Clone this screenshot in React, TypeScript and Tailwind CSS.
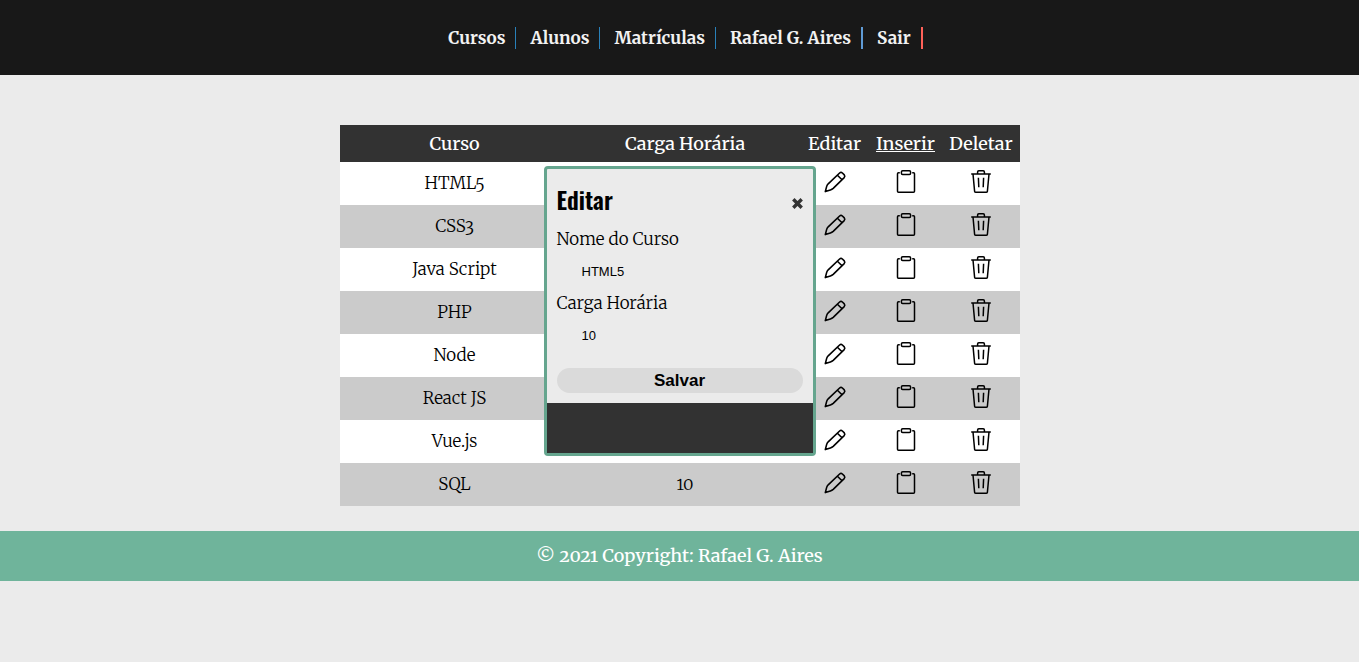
import { useState } from "react";

const links = [
  { label: "Cursos", line: "border-r border-[#2980b9]" },
  { label: "Alunos", line: "border-r border-[#2980b9]" },
  { label: "Matrículas", line: "border-r border-[#2980b9]" },
  { label: "Rafael G. Aires", line: "border-r-2 border-[#5f9bd5]" },
  { label: "Sair", line: "border-r-2 border-[#ff6158]" },
];

const courses = ["HTML5", "CSS3", "Java Script", "PHP", "Node", "React JS", "Vue.js", "SQL"];

function PencilIcon() {
  return (
    <svg className="block" width="24" height="24" viewBox="0 0 24 24" fill="none" stroke="currentColor" strokeWidth="1.6" strokeLinejoin="round" aria-hidden="true">
      <path d="M2.3 21.6 L3.6 16.6 Q4 15 5.2 13.8 L16.6 3 Q18 1.8 19.4 3 L21.3 4.9 Q22.4 6.2 21.2 7.6 L10.2 18.4 Q9 19.5 7.4 20 Z M14.4 5.2 L19 9.7" />
    </svg>
  );
}

function ClipboardIcon() {
  return (
    <svg className="block" width="24" height="24" viewBox="0 0 24 24" fill="none" stroke="currentColor" strokeWidth="1.5" strokeLinejoin="round" aria-hidden="true">
      <path d="M5.8 2.8 H4.5 Q3.5 2.8 3.5 3.8 V21.3 Q3.5 22.3 4.5 22.3 H19.5 Q20.5 22.3 20.5 21.3 V3.8 Q20.5 2.8 19.5 2.8 H18.2" />
      <rect x="7.4" y="0.8" width="9.2" height="3.6" rx="1.2" />
    </svg>
  );
}

function TrashIcon() {
  return (
    <svg className="block" width="24" height="24" viewBox="0 0 24 24" fill="none" stroke="currentColor" strokeWidth="1.5" strokeLinejoin="round" aria-hidden="true">
      <path d="M2.2 3.9 H21.8 M8.6 3.5 V2 Q8.6 0.8 9.8 0.8 H14.2 Q15.4 0.8 15.4 2 V3.5 M4 4 L5.6 21.3 Q5.8 22.3 6.8 22.3 H17.2 Q18.2 22.3 18.4 21.3 L20 4 M9.4 7.8 L9.8 17.2 M14.6 7.8 L14.2 17.2" />
    </svg>
  );
}

function EditDialog({ onClose }: { onClose: () => void }) {
  return (
    <div role="dialog" aria-labelledby="dialog-title" className="absolute top-[41px] left-1/2 w-68 -translate-x-1/2 rounded-sm border-3 border-[#65a58e] bg-[#ebebeb]">
      <form className="flex flex-col px-2.5 pt-3 pb-2.5" onSubmit={(e) => e.preventDefault()}>
        <div className="mb-1 flex items-center justify-between">
          <h2 id="dialog-title" className="font-['Oswald','Roboto_Condensed','Roboto',sans-serif] text-2xl leading-9 font-semibold">Editar</h2>
          <button type="button" aria-label="Fechar" onClick={onClose} className="pt-2 text-[#333]">
            <svg width="11" height="11" viewBox="0 0 11 11" fill="none" stroke="currentColor" strokeWidth="3.4" aria-hidden="true">
              <path d="M1.3 1.3 L9.7 9.7 M9.7 1.3 L1.3 9.7" />
            </svg>
          </button>
        </div>
        <label htmlFor="course-name" className="leading-9">Nome do Curso</label>
        <input id="course-name" defaultValue="HTML5" className="h-7 w-full bg-transparent pl-[25px] font-['Liberation_Sans',Arial,sans-serif] text-[13px] outline-none" />
        <label htmlFor="course-hours" className="leading-9">Carga Horária</label>
        <input id="course-hours" defaultValue="10" className="h-7 w-full bg-transparent pl-[25px] font-['Liberation_Sans',Arial,sans-serif] text-[13px] outline-none" />
        <button type="submit" className="mt-[19px] h-[25px] rounded-full bg-[#dadada] font-['Liberation_Sans',Arial,sans-serif] text-[17px] leading-6 font-bold">Salvar</button>
      </form>
      <div className="h-[50px] bg-[#323232]" />
    </div>
  );
}

export default function App() {
  const [editing, setEditing] = useState(true);
  const edit = () => setEditing(true);

  return (
    <div className="min-h-screen bg-[#ebebeb] font-['Merriweather','DejaVu_Serif_Condensed','DejaVu_Serif',serif] text-[17px] font-light text-black [font-variant-numeric:oldstyle-nums]">
      <header className="flex h-[75px] items-center justify-center bg-[#181818]">
        <nav className="flex gap-3.5 pl-3">
          {links.map((link) => (
            <a key={link.label} href="#" className={`pr-2.5 text-[17px] leading-[22px] font-bold text-[#f2f2f2] ${link.line}`}>{link.label}</a>
          ))}
        </nav>
      </header>
      <main className="relative mx-auto mt-[50px] w-full max-w-[680px]">
        <table className="w-full table-fixed border-collapse text-center">
          <colgroup>
            <col className="w-[230px]" />
            <col className="w-[231px]" />
            <col className="w-[68px]" />
            <col className="w-[74px]" />
            <col className="w-[77px]" />
          </colgroup>
          <thead className="bg-[#323232] text-lg text-white">
            <tr className="h-[37px]">
              <th className="p-0 font-medium">Curso</th>
              <th className="p-0 font-medium">Carga Horária</th>
              <th className="p-0 font-medium">Editar</th>
              <th className="p-0 font-medium"><a href="#" className="underline">Inserir</a></th>
              <th className="p-0 font-medium">Deletar</th>
            </tr>
          </thead>
          <tbody>
            {courses.map((course) => (
              <tr key={course} className="h-[43px] bg-white even:bg-[#cbcbcb]">
                <td className="p-0 pt-px">{course}</td>
                <td className="p-0 pt-px">10</td>
                <td className="p-0 pb-1"><button type="button" aria-label={`Editar ${course}`} onClick={edit} className="mx-auto block"><PencilIcon /></button></td>
                <td className="p-0 pb-1"><button type="button" aria-label={`Inserir ${course}`} className="mx-auto block"><ClipboardIcon /></button></td>
                <td className="p-0 pb-1"><button type="button" aria-label={`Deletar ${course}`} className="mx-auto block"><TrashIcon /></button></td>
              </tr>
            ))}
          </tbody>
        </table>
        {editing && <EditDialog onClose={() => setEditing(false)} />}
      </main>
      <footer className="mt-[25px] flex h-[50px] items-center justify-center bg-[#6fb49b] text-lg font-medium text-white">
        © 2021 Copyright: Rafael G. Aires
      </footer>
    </div>
  );
}
